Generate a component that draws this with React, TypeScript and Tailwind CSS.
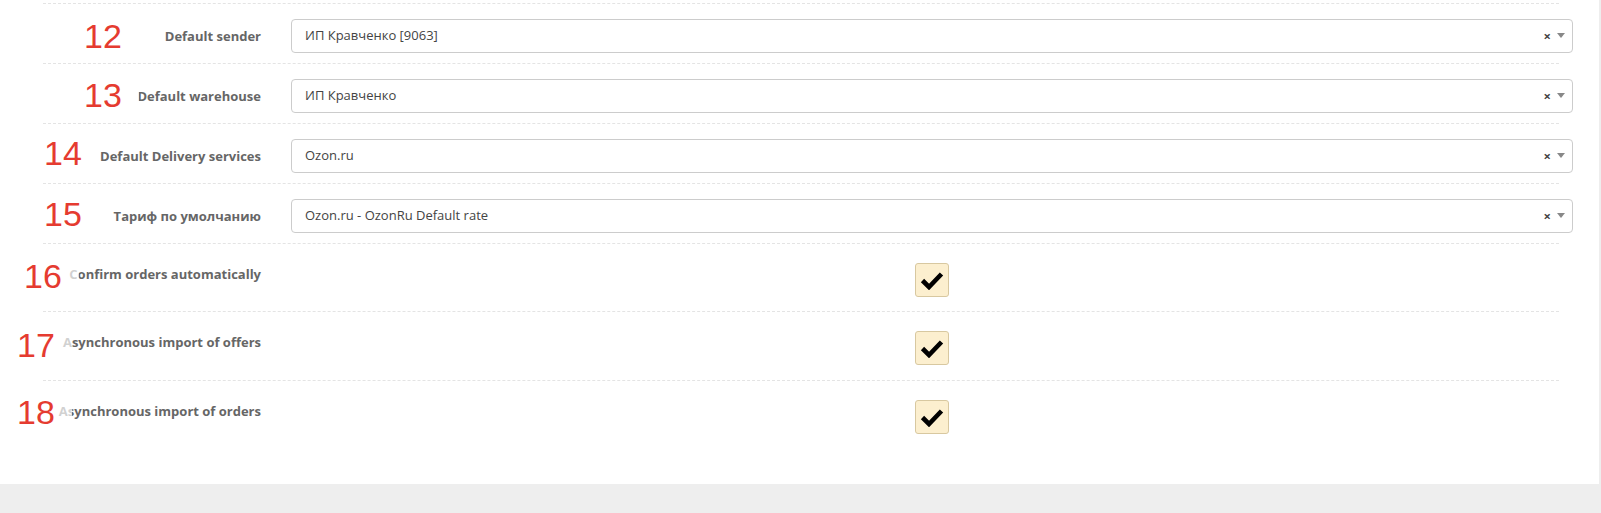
const selectRows = [
  { n: "12", label: "Default sender", value: "ИП Кравченко [9063]", numLeft: "left-[41px]", numTop: "top-[16px]" },
  { n: "13", label: "Default warehouse", value: "ИП Кравченко", numLeft: "left-[41px]", numTop: "top-[15px]" },
  { n: "14", label: "Default Delivery services", value: "Ozon.ru", numLeft: "left-[1px]", numTop: "top-[13px]" },
  { n: "15", label: "Тариф по умолчанию", value: "Ozon.ru - OzonRu Default rate", numLeft: "left-[1px]", numTop: "top-[14px]" },
];

const checkRows = [
  { n: "16", label: "Confirm orders automatically", numLeft: "left-[-19px]", numTop: "top-[16px]", pb: "pb-[14px]" },
  { n: "17", label: "Asynchronous import of offers", numLeft: "left-[-26px]", numTop: "top-[17px]", pb: "pb-[15px]" },
  { n: "18", label: "Asynchronous import of orders", numLeft: "left-[-26px]", numTop: "top-[15px]", pb: "pb-[50px]" },
];

const font = "font-['Open_Sans',sans-serif]";

function Divider() {
  return <div className="mr-[14px] border-t border-dashed border-[#e4e4e4]" />;
}

function Marker({ n, left, top }: { n: string; left: string; top: string }) {
  return (
    <span
      className={`absolute ${left} ${top} z-10 bg-white/70 pr-[17px] font-['Liberation_Sans',Arial,sans-serif] text-[34px] leading-[35px] text-[#e53b30]`}
    >
      {n}
    </span>
  );
}

function Check() {
  return (
    <span className="flex h-[34px] w-[34px] items-center justify-center rounded-[3px] border border-[#d8c8a0] bg-[#fcefcf]">
      <svg width="24" height="19" viewBox="0 0 24 19" aria-hidden="true">
        <polyline points="2.5,9.5 9,16 21.5,3" fill="none" stroke="#000" strokeWidth="4.6" strokeLinejoin="miter" />
      </svg>
    </span>
  );
}

export default function App() {
  return (
    <div className={`min-h-[513px] w-full bg-[#eeeeee] ${font}`}>
      <div className="w-[1599px] bg-white pt-[3px]">
        <div className="ml-[43px] w-[1530px]">
          {selectRows.map((r) => (
            <div key={r.n} className="relative">
              <Divider />
              <Marker n={r.n} left={r.numLeft} top={r.numTop} />
              <div className="flex items-center pt-[15px] pb-[10px]">
                <label className="w-[218px] text-right text-[13px] font-bold leading-5 text-[#666]">{r.label}</label>
                <div className="ml-[30px] flex h-[34px] flex-1 items-center rounded-[4px] border border-[#cccccc] pl-[13px] pr-[7px]">
                  <span className="flex-1 text-[13px] text-[#444]">{r.value}</span>
                  <span className="mr-[6px] text-[13px] font-bold leading-none text-[#444]">×</span>
                  <span className="mb-[2px] h-0 w-0 border-x-[4px] border-t-[5px] border-x-transparent border-t-[#888]" />
                </div>
              </div>
            </div>
          ))}
          {checkRows.map((r) => (
            <div key={r.n} className="relative">
              <Divider />
              <Marker n={r.n} left={r.numLeft} top={r.numTop} />
              <div className={`flex items-start pt-[19px] ${r.pb}`}>
                <label className="mt-[1px] w-[218px] text-right text-[13px] font-bold leading-5 text-[#666]">{r.label}</label>
                <div className="ml-[30px] flex flex-1 justify-center">
                  <Check />
                </div>
              </div>
            </div>
          ))}
        </div>
      </div>
    </div>
  );
}
